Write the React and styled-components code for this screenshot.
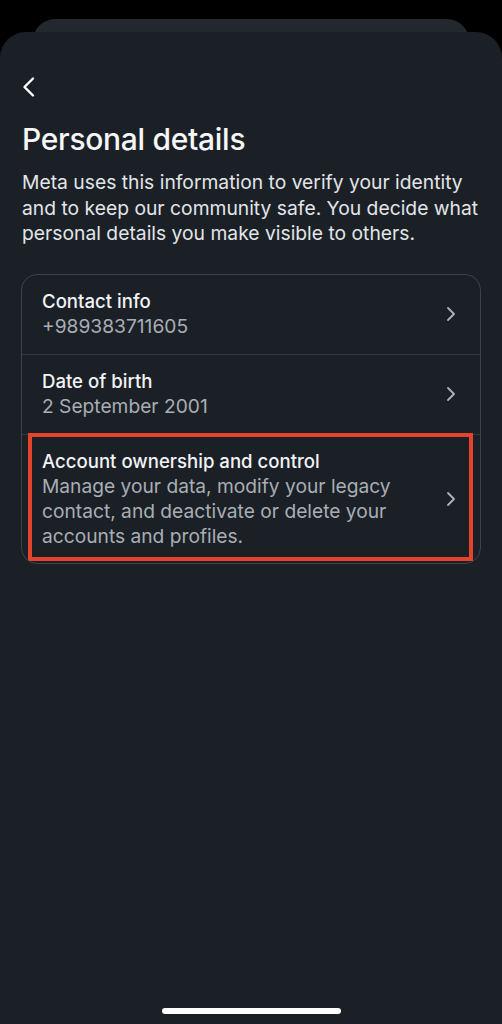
import React from 'react'
import styled, { createGlobalStyle, css } from 'styled-components'

const GlobalStyle = createGlobalStyle`
  html, body {
    margin: 0;
    padding: 0;
    background: #000;
  }

  body {
    font-family: Inter, "Noto Sans", sans-serif;
    -webkit-font-smoothing: antialiased;
  }
`

const Screen = styled.div`
  display: flex;
  flex-direction: column;
  min-height: 100vh;
  padding-top: 19px;
  box-sizing: border-box;
`

const BackSheet = styled.div`
  height: 30px;
  margin: 0 33px;
  border-radius: 22px 22px 0 0;
  background: #23282e;
`

const Sheet = styled.div`
  flex: 1;
  display: flex;
  flex-direction: column;
  margin-top: -17px;
  border-radius: 26px 26px 0 0;
  background: #1b2027;
  padding: 0 21px 10px;
`

const BackButton = styled.button`
  display: flex;
  align-items: center;
  width: 24px;
  height: 24px;
  margin: 43px 0 0;
  padding: 0;
  border: 0;
  background: none;
  cursor: pointer;
`

const Title = styled.h1`
  margin: 22px 0 0 1px;
  font-size: 30px;
  line-height: 36px;
  font-weight: 500;
  letter-spacing: -0.3px;
  color: #f5f6f7;
`

const Intro = styled.p`
  margin: 13px 0 0 1px;
  font-size: 19.3px;
  line-height: 25.5px;
  font-weight: 400;
  color: #e2e5e9;
`

const Card = styled.div`
  margin-top: 27px;
  border: 1px solid #3b434c;
  border-radius: 16px;
  overflow: hidden;
`

const Row = styled.div`
  position: relative;
  display: flex;
  align-items: center;
  padding: 14px 20px 15px 20px;
  cursor: pointer;

  & + & {
    border-top: 1px solid #323a43;
  }

  ${({ highlighted }) =>
    highlighted &&
    css`
      padding-top: 14.5px;
      padding-bottom: 13.5px;
    `}
`

const Highlight = styled.div`
  position: absolute;
  top: -2px;
  left: 6px;
  right: 7px;
  bottom: 2px;
  border: 4px solid #e6432c;
  pointer-events: none;
`

const RowText = styled.div`
  flex: 1;
  display: flex;
  flex-direction: column;
  max-width: 365px;
`

const RowTitle = styled.span`
  font-size: 18.6px;
  line-height: 25px;
  font-weight: 500;
  color: #f2f3f5;
`

const RowValue = styled.span`
  font-size: 19.2px;
  line-height: 25px;
  font-weight: 400;
  color: #a9aeb4;
`

const Chevron = styled.svg`
  margin-left: auto;
  margin-right: 4px;
  flex-shrink: 0;
`

const HomeIndicator = styled.div`
  align-self: center;
  width: 179px;
  height: 6px;
  margin-top: auto;
  border-radius: 3px;
  background: #fff;
`

const rows = [
  { title: 'Contact info', value: '+989383711605' },
  { title: 'Date of birth', value: '2 September 2001' },
  {
    title: 'Account ownership and control',
    value: 'Manage your data, modify your legacy contact, and deactivate or delete your accounts and profiles.',
    highlighted: true
  }
]

const ChevronIcon = () => (
  <Chevron width="10" height="16" viewBox="0 0 10 16" fill="none">
    <path d="M2 2l6 6-6 6" stroke="#aeb3b9" strokeWidth="1.8" strokeLinecap="round" strokeLinejoin="round" />
  </Chevron>
)

export default function App() {
  return (
    <Screen>
      <GlobalStyle />
      <BackSheet />
      <Sheet>
        <BackButton aria-label="Back">
          <svg width="18" height="22" viewBox="0 0 18 22" fill="none">
            <path d="M12 2.5L3.5 11l8.5 8.5" stroke="#ffffff" strokeWidth="2.4" strokeLinecap="round" strokeLinejoin="round" />
          </svg>
        </BackButton>

        <Title>Personal details</Title>
        <Intro>
          Meta uses this information to verify your identity and to keep our community safe. You decide what
          personal details you make visible to others.
        </Intro>

        <Card>
          {rows.map((row) => (
            <Row key={row.title} highlighted={row.highlighted}>
              <RowText>
                <RowTitle>{row.title}</RowTitle>
                <RowValue>{row.value}</RowValue>
              </RowText>
              <ChevronIcon />
              {row.highlighted && <Highlight />}
            </Row>
          ))}
        </Card>

        <HomeIndicator />
      </Sheet>
    </Screen>
  )
}
